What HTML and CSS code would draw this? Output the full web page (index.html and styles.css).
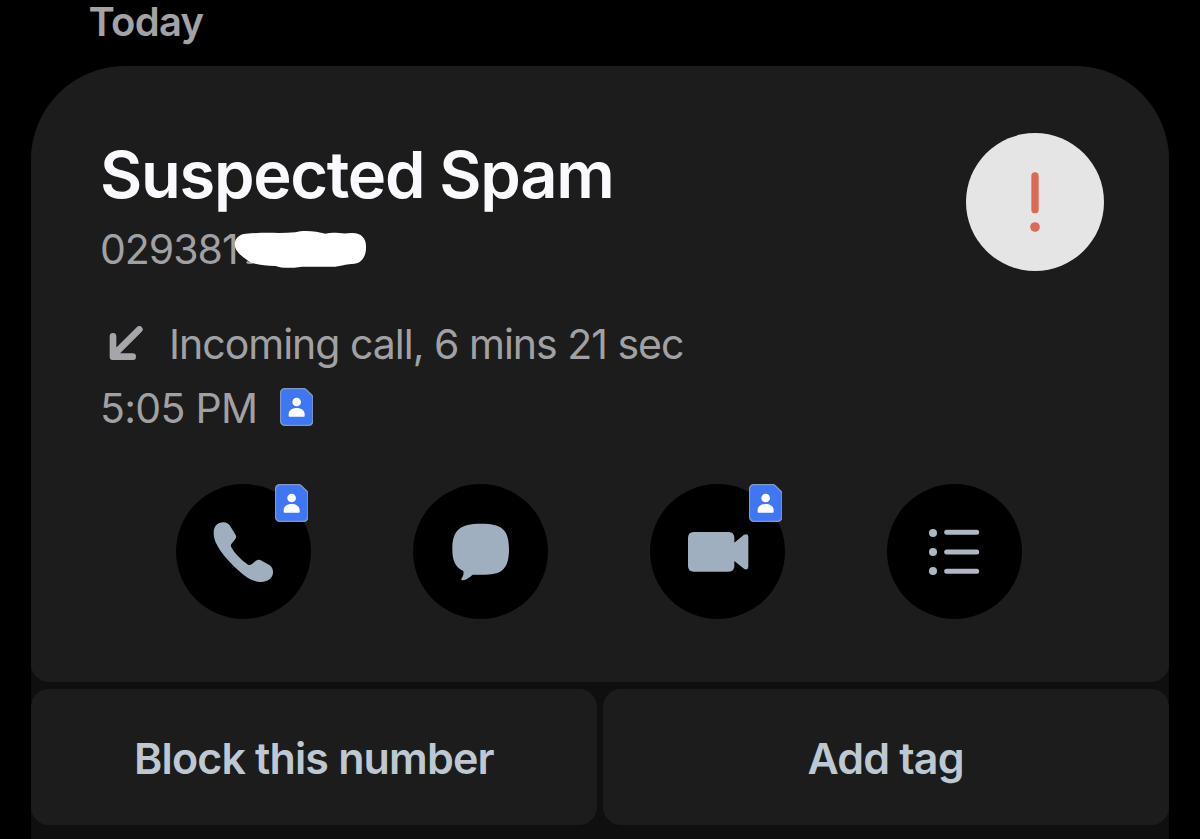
FILE: index.html
```html
<!DOCTYPE html>
<html lang="en">
<head>
<meta charset="utf-8">
<title>Call history</title>
<link rel="stylesheet" href="styles.css">
</head>
<body>
<svg class="defs" aria-hidden="true">
  <symbol id="contact" viewBox="0 0 100 114">
    <path d="M17 1.5H71Q75 1.5 78 4.5L95 21Q98.500 24.500 98.500 29V97Q98.500 112.500 83 112.500H17Q1.500 112.500 1.500 97V17Q1.500 1.500 17 1.500Z" fill="#3e76f4" stroke="#8298c5" stroke-width="4"/>
    <circle cx="50" cy="42" r="13" fill="#fff"/>
    <path d="M26 84V79C26 66 38 60 50 60S74 66 74 79V84Q74 86 72 86H28Q26 86 26 84Z" fill="#fff"/>
  </symbol>
</svg>
<main class="screen">
  <h2 class="day">Today</h2>
  <section class="panel">
    <article class="card">
      <header class="summary">
        <div class="details">
          <h1 class="name"><span>Suspected Spam</span></h1>
          <div class="number"><span>029381</span>
            <svg class="redaction" viewBox="0 0 405 120">
              <path d="M44 99Q54 105 66 98" fill="none" stroke="#a1a1a4" stroke-width="7"/>
              <path d="M8 45C8 28 25 14 42 14C100 9 145 14 190 10C215 2 255 7 280 14C305 8 325 15 350 13C384 8 402 26 402 50C404 80 390 106 358 105C340 106 330 111 310 113H210C175 118 150 118 130 111C95 109 60 108 42 91C25 78 8 65 8 45Z" fill="#fff"/>
            </svg>
          </div>
          <div class="call">
            <svg class="arrow" viewBox="0 0 102 104"><path d="M91 10L18 83M12 31V92H71" fill="none" stroke="#a6a6aa" stroke-width="20" stroke-linecap="round" stroke-linejoin="round"/></svg>
            <span class="kind">Incoming call, 6 mins 21 sec</span>
          </div>
          <div class="time"><span class="clock">5:05 PM</span><svg class="badge"><use href="#contact"/></svg></div>
        </div>
        <div class="avatar">
          <svg viewBox="0 0 414 414"><path d="M207 129V230" stroke="#db6a50" stroke-width="22" stroke-linecap="round"/><circle cx="207" cy="282" r="14.500" fill="#db6a50"/></svg>
        </div>
      </header>
      <nav class="actions">
        <button class="action" aria-label="Call">
          <svg class="icon" viewBox="48 39 405 405"><path d="M161 185C161 165 173 154 190 154C201 154 207 160 211 166L227 192Q230 198 226 204L214 219Q211 223 214 229C224 247 244 268 264 281Q270 284 275 280L288 269Q294 264 301 267L328 282C336 287 340 296 339 306C337 322 323 333 303 333C280 333 260 319 243 305C212 279 182 246 168 216C163 205 161 195 161 185Z"/></svg>
          <svg class="badge corner"><use href="#contact"/></svg>
        </button>
        <button class="action" aria-label="Message">
          <svg class="icon" viewBox="37 39 405 405"><path d="M240 158C302 158 325 174 325 234C325 289 307 311 254 311H216C207 320 193 328 184 328Q180 327 183 322C188 315 190 307 188 300C164 290 155 268 155 234C155 176 179 158 240 158Z"/></svg>
        </button>
        <button class="action" aria-label="Video call">
          <svg class="icon" viewBox="27 39 405 405"><path d="M158 183H263Q280 183 280 201V215L309 191Q322 186 322 199V287Q321 299 310 294L280 270V285Q280 302 263 302H158Q141 302 141 285V201Q141 183 158 183Z"/></svg>
          <svg class="badge corner"><use href="#contact"/></svg>
        </button>
        <button class="action" aria-label="History">
          <svg class="icon list" viewBox="52 39 405 405"><circle cx="190" cy="186" r="12"/><circle cx="190" cy="243" r="12"/><circle cx="190" cy="300" r="12"/><path d="M231 184H321M231 243H321M231 301H321"/></svg>
        </button>
      </nav>
    </article>
    <div class="choices">
      <button class="choice"><span class="block">Block this number</span></button>
      <button class="choice"><span class="tag">Add tag</span></button>
    </div>
  </section>
</main>
</body>
</html>
```
FILE: styles.css
```css
* { box-sizing: border-box; }
body { margin: 0; background: #000; font-family: Inter, "Liberation Sans", sans-serif; }
button { border: 0; padding: 0; font: inherit; }
svg { display: block; }
.defs { width: 0; height: 0; position: absolute; }
.screen { height: 839px; overflow: hidden; padding: 0 31.500px 0 31px; }
.day { margin: 0; height: 66px; padding-left: 57.500px; font-size: 40px; line-height: 44px; font-weight: 600; letter-spacing: -0.7px; color: #a3a3a6; }
.panel { height: 773px; background: #0f0f0f; border-radius: 94px 94px 0 0; overflow: hidden; }
.card { height: 616px; background: #1c1c1c; border-radius: 0 0 18px 18px; padding: 67px 65px 0 69px; }
.summary { display: flex; justify-content: space-between; height: 350.500px; }
.details { white-space: nowrap; color: #a1a1a4; font-size: 41px; }
.name { margin: 2px 0 4px; color: #fafafe; font-size: 65px; line-height: 80px; font-weight: 600; letter-spacing: -1.3px; }
.number { position: relative; line-height: 60px; height: 60px; letter-spacing: -1px; }
.redaction { position: absolute; left: 131.500px; top: 10px; width: 135px; height: 40px; }
.call { display: flex; align-items: center; height: 64px; margin-top: 32px; padding-left: 8.500px; }
.arrow { width: 34px; height: 34.700px; margin-right: 26.500px; }
.kind { letter-spacing: -1px; padding-top: 2px; }
.time { display: flex; align-items: center; height: 64px; }
.clock { width: 179.500px; letter-spacing: -0.7px; padding-top: 2px; }
.badge { width: 33.300px; height: 38px; }
.avatar { width: 138px; height: 138px; border-radius: 50%; background: #e5e5e5; }
.actions { display: flex; justify-content: space-between; width: 846px; margin-left: 75.500px; }
.action { position: relative; width: 135px; height: 135px; border-radius: 50%; background: #000; }
.icon { width: 135px; height: 135px; fill: #9fafbf; }
.list { fill: #adb8c4; stroke: none; }
.list path { stroke: #adb8c4; stroke-width: 15px; stroke-linecap: round; }
.corner { position: absolute; left: 99.700px; top: 0; }
.choices { display: grid; grid-template-columns: 1fr 1fr; gap: 6px; margin-top: 7px; }
.choice { height: 136px; border-radius: 18px; background: #1c1c1c; color: #bdc8d2; font-size: 43px; font-weight: 600; line-height: 138px; white-space: nowrap; }
.block, .tag { letter-spacing: -0.85px; }
```
